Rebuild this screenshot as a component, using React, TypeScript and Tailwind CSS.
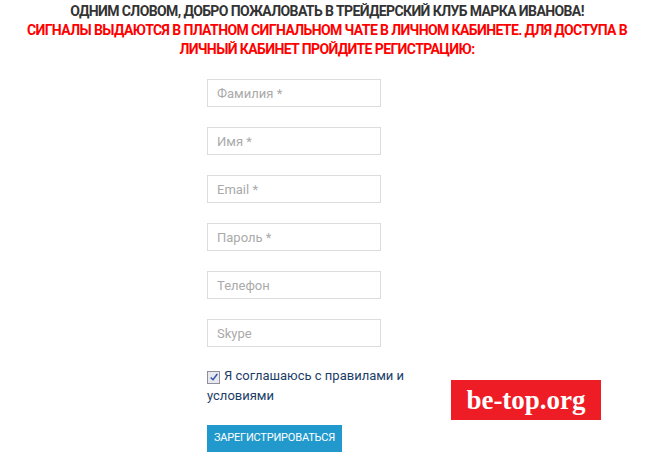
import React from 'react';

const fields = ['Фамилия *', 'Имя *', 'Email *', 'Пароль *', 'Телефон', 'Skype'];

export default function App() {
  return (
    <div className="relative w-[648px] h-[472px] bg-white font-['Roboto',sans-serif] overflow-hidden">
      {/* Heading */}
      <div className="pt-[2px] pl-[6px] text-center text-[14px] font-bold leading-[19px] tracking-[-0.6px] uppercase">
        <div className="text-[#333]">Одним словом, добро пожаловать в трейдерский клуб Марка Иванова!</div>
        <div className="text-[#ff0000] px-[18px]">
          Сигналы выдаются в платном сигнальном чате в личном кабинете. Для доступа в личный кабинет пройдите регистрацию:
        </div>
      </div>

      {/* Form */}
      <div className="ml-[207px] mt-[20px] w-[174px] flex flex-col gap-[20px]">
        {fields.map((f) => (
          <input
            key={f}
            placeholder={f}
            className="h-[28px] w-[174px] border border-[#dcdcdc] px-[9px] text-[13px] text-[#555] placeholder:text-[#aaa] outline-none"
          />
        ))}
      </div>

      <div className="ml-[207px] mt-[19px] w-[220px] text-[13px] leading-[20px] text-[#1b3d68]">
        <span className="inline-flex items-center justify-center w-[13px] h-[13px] mr-[4px] align-[-2px] border border-[#8f8f9d] bg-[#e8e8ef]">
          <svg viewBox="0 0 12 12" className="w-[10px] h-[10px]">
            <path d="M2 6.5 L4.8 9.2 L10 2.5" fill="none" stroke="#3355aa" strokeWidth="1.8" />
          </svg>
        </span>
        Я соглашаюсь с правилами и условиями
      </div>

      <button className="ml-[207px] mt-[19px] h-[27px] w-[135px] bg-[#2299cc] text-white text-[11px] tracking-[-0.2px] uppercase">
        Зарегистрироваться
      </button>

      {/* watermark */}
      <div className="absolute left-[451px] top-[380px] w-[150px] h-[40px] bg-[#ee1c25] flex items-center justify-center text-white font-bold text-[27px] font-['Liberation_Serif',serif]">
        be-top.org
      </div>
    </div>
  );
}
